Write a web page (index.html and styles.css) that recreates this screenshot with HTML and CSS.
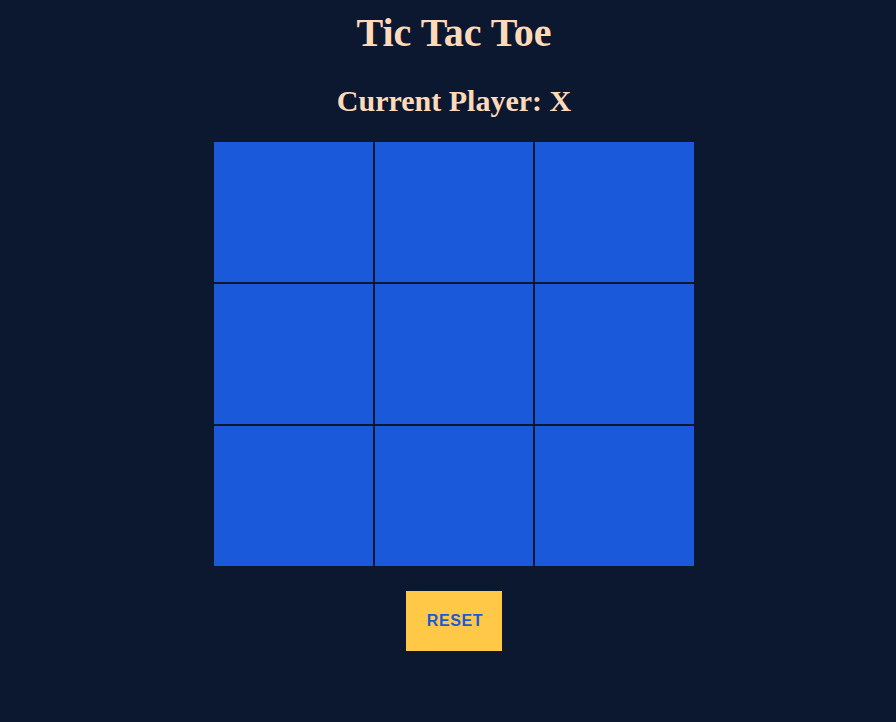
FILE: index.html
```html
<!DOCTYPE html>
<html>
<head>
<meta charset="utf-8">
<link rel="stylesheet" href="styles.css">
</head>
<body>
<div class="app">
  <h1 class="title">Tic Tac Toe</h1>
  <h2 class="status">Current Player: X</h2>
  <div class="board">
    <div class="cell"></div><div class="cell"></div><div class="cell"></div>
    <div class="cell"></div><div class="cell"></div><div class="cell"></div>
    <div class="cell"></div><div class="cell"></div><div class="cell"></div>
  </div>
  <button class="reset">RESET</button>
</div>
</body>
</html>
```
FILE: styles.css
```css
html, body {
  margin: 0;
  padding: 0;
  background: #0b1830;
  height: 100%;
}
.app {
  padding-left: 12px;
  display: flex;
  flex-direction: column;
  align-items: center;
  font-family: "Liberation Serif", "Times New Roman", serif;
  color: #ffdab9;
}
.title {
  font-size: 40px;
  font-weight: bold;
  margin: 11px 0 0;
  line-height: 44px;
}
.status {
  font-size: 30px;
  font-weight: bold;
  margin: 28px 0 0;
  line-height: 36px;
}
.board {
  margin-top: 22px;
  width: 482px;
  display: grid;
  grid-template-columns: repeat(3, 1fr);
}
.cell {
  box-sizing: border-box;
  height: 142px;
  background: #1959da;
  border: 1px solid #0b1830;
}
.reset {
  margin-top: 24px;
  width: 96px;
  height: 60px;
  border: none;
  background: #ffc947;
  color: #1959da;
  font-family: "Liberation Sans", Arial, sans-serif;
  font-weight: bold;
  font-size: 16px;
  letter-spacing: 0.6px;
  padding: 0 0 0 2px;
  cursor: pointer;
}
```
